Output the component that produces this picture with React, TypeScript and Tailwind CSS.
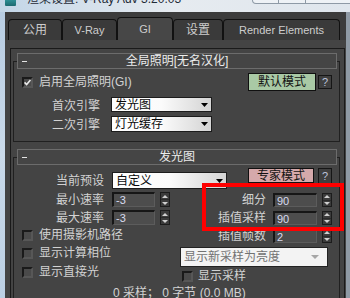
import React from "react";

const FONT = "font-['Liberation_Sans','Noto_Sans_CJK_SC',sans-serif]";

function Check({ checked = false }: { checked?: boolean }) {
  return (
    <div className="w-[11px] h-[11px] shrink-0 border-2 border-t-[#1a1a1a] border-l-[#1a1a1a] border-r-[#575757] border-b-[#575757] bg-[#4a4a4a] flex items-center justify-center">
      {checked && (
        <svg width="8" height="7" viewBox="0 0 8 7">
          <path d="M0.6 3.4 L3 5.9 L7.4 0.6" stroke="#ececec" strokeWidth="1.8" fill="none" />
        </svg>
      )}
    </div>
  );
}

function Label({ children, className = "" }: { children: React.ReactNode; className?: string }) {
  return <span className={`text-[12px] leading-[14px] text-[#d2d2d2] whitespace-nowrap ${className}`}>{children}</span>;
}

function Spin() {
  return (
    <div className="w-[10px] h-full shrink-0 border border-[#1c1c1c] bg-[#3b3b3b] flex flex-col">
      <div className="flex-1 flex items-center justify-center border-b border-[#2a2a2a]">
        <svg width="6" height="3" viewBox="0 0 6 3">
          <polygon points="0,3 3,0 6,3" fill="#cfcfcf" />
        </svg>
      </div>
      <div className="flex-1 flex items-center justify-center">
        <svg width="6" height="3" viewBox="0 0 6 3">
          <polygon points="0,0 6,0 3,3" fill="#cfcfcf" />
        </svg>
      </div>
    </div>
  );
}

function Num({ v, className = "" }: { v: string; className?: string }) {
  return (
    <div
      className={`h-full shrink-0 border-t-2 border-l-2 border-r border-b border-t-[#161616] border-l-[#161616] border-r-[#5c5c5c] border-b-[#5c5c5c] bg-[#4d4d4d] flex items-center pl-[2px] text-[11px] leading-[12px] text-[#d8dbf0] ${className}`}
    >
      {v}
    </div>
  );
}

function Drop({ text, className = "" }: { text: string; className?: string }) {
  return (
    <div
      className={`shrink-0 border border-[#1c1c1c] bg-linear-to-r from-white via-[#fbfbfb] to-[#d4d4d4] flex items-center justify-between pl-[3px] pr-[3px] ${className}`}
    >
      <span className="text-[12px] leading-[14px] text-[#0a0a0a] whitespace-nowrap">{text}</span>
      <svg width="7" height="4" viewBox="0 0 7 4">
        <polygon points="0,0 7,0 3.5,4" fill="#000" />
      </svg>
    </div>
  );
}

function Tab({ label, w, active = false, latin = false }: { label: string; w: string; active?: boolean; latin?: boolean }) {
  return (
    <div
      className={`${w} ${active ? "h-[23px] bg-[#474747]" : "h-[21px] bg-[#3a3a3a]"} shrink-0 border border-b-0 border-[#111111] rounded-t-[4px] flex items-center justify-center ${latin ? "text-[11px]" : "text-[12px]"} leading-[14px] text-[#cdcdcd]`}
    >
      {label}
    </div>
  );
}

function RHead({ title }: { title: string }) {
  return (
    <div className="relative z-10 ml-[4px] mr-[3px] h-[16px] border border-[#6c6c6c] bg-[#454545] flex items-center">
      <div className="ml-[4px] w-[5px] h-[1px] bg-[#e4e4e4] shrink-0" />
      <div className="flex-1 -ml-[9px] text-center text-[12px] leading-[14px] text-[#ececec] whitespace-nowrap">{title}</div>
    </div>
  );
}

function QBtn({ className = "" }: { className?: string }) {
  return (
    <div className={`w-[14px] shrink-0 border border-[#161616] bg-[#3f3f3f] flex items-center justify-center text-[11px] leading-[12px] text-[#bcc3dc] ${className}`}>
      ?
    </div>
  );
}

export default function App() {
  return (
    <div className={`relative w-[350px] h-[298px] overflow-hidden bg-[#c7d6e4] ${FONT}`}>
      {/* title bar */}
      <div className="h-[12px] flex items-start overflow-hidden bg-linear-to-r from-[#c3d6e7] via-[#e6ebf0] to-[#dfe6ed]">
        <div className="ml-[5px] w-[11px] h-[6px] shrink-0 bg-linear-to-b from-[#2f8f94] to-[#1d6a70] rounded-b-[1px]" />
        <div className="ml-[11px] -mt-[8px] text-[12px] leading-[14px] text-[#1f2b38] whitespace-nowrap">渲染设置: V-Ray Adv 3.20.03</div>
        <div className="ml-auto -mr-[6px] w-[104px] h-[4px] shrink-0 border border-t-0 border-[#8e9aa6] rounded-b-[4px] bg-[#eef2f6] flex">
          <div className="w-[26px] border-r border-[#8e9aa6]" />
          <div className="w-[27px] border-r border-[#8e9aa6]" />
        </div>
      </div>

      {/* body */}
      <div className="h-[286px] flex">
        <div className="w-[5px] shrink-0 bg-linear-to-b from-[#b8cde2] via-[#cadaea] to-[#bcd0e4]" />
        <div className="w-[341px] shrink-0 bg-[#3c3c3c] flex flex-col">
          <div className="h-[5px] shrink-0" />
          {/* tabs */}
          <div className="h-[23px] shrink-0 flex items-end pl-[3px]">
            <Tab label="公用" w="w-[54px]" />
            <Tab label="V-Ray" w="w-[55px]" latin />
            <Tab label="GI" w="w-[56px]" active latin />
            <Tab label="设置" w="w-[50px]" />
            <Tab label="Render Elements" w="w-[117px]" latin />
          </div>
          {/* panel */}
          <div className="flex-1 bg-[#444444] pt-[8px] pl-[5px] pr-[1px] overflow-hidden">
            <div className="h-full border-t border-l border-r border-[#1a1a1a] pt-[4px] pl-[2px]">
              <div className="w-[327px]">
                {/* rollout 1 */}
                <RHead title="全局照明[无名汉化]" />
                <div className="-mt-[8px] border border-[#202020] pt-[11px] pb-[9px]">
                  <div className="h-[18px] flex items-center pl-[8px] pr-[7px]">
                    <Check checked />
                    <Label className="ml-[6px]">启用全局照明(GI)</Label>
                    <div className="ml-auto w-[68px] h-[18px] shrink-0 border border-[#101010] bg-[#a9c9a5] flex items-center justify-center text-[12px] leading-[14px] text-[#121212]">
                      默认模式
                    </div>
                    <QBtn className="ml-[2px] h-[14px]" />
                  </div>
                  <div className="mt-[6px] h-[15px] flex items-center">
                    <div className="w-[86px] shrink-0 text-right">
                      <Label>首次引擎</Label>
                    </div>
                    <Drop text="发光图" className="ml-[11px] w-[101px] h-[15px]" />
                  </div>
                  <div className="mt-[4px] h-[16px] flex items-center">
                    <div className="w-[86px] shrink-0 text-right">
                      <Label>二次引擎</Label>
                    </div>
                    <Drop text="灯光缓存" className="ml-[11px] w-[101px] h-[16px]" />
                  </div>
                </div>

                {/* rollout 2 */}
                <div className="mt-[7px]">
                  <RHead title="发光图" />
                </div>
                <div className="-mt-[8px] border border-b-0 border-[#202020] pt-[10px] h-[200px]">
                  <div className="h-[22px] flex items-start">
                    <div className="mt-[4px] w-[90px] h-[17px] shrink-0 flex items-center justify-end">
                      <Label>当前预设</Label>
                    </div>
                    <Drop text="自定义" className="mt-[4px] ml-[8px] w-[115px] h-[17px]" />
                    <div className="ml-[21px] w-[66px] h-[15px] shrink-0 border border-[#101010] bg-[#d5a9ab] flex items-center justify-center text-[12px] leading-[14px] text-[#121212]">
                      专家模式
                    </div>
                    <QBtn className="ml-[4px] h-[16px]" />
                  </div>
                  <div className="mt-[2px] flex">
                    {/* left column */}
                    <div className="w-[164px] shrink-0 flex flex-col">
                      <div className="h-[15px] flex">
                        <div className="w-[90px] shrink-0 flex items-center justify-end">
                          <Label>最小速率</Label>
                        </div>
                        <Num v="-3" className="ml-[8px] w-[43px]" />
                        <div className="ml-[5px] h-full">
                          <Spin />
                        </div>
                      </div>
                      <div className="mt-[3px] h-[15px] flex">
                        <div className="w-[90px] shrink-0 flex items-center justify-end">
                          <Label>最大速率</Label>
                        </div>
                        <Num v="-3" className="ml-[8px] w-[43px]" />
                        <div className="ml-[5px] h-full">
                          <Spin />
                        </div>
                      </div>
                      <div className="mt-[4px] h-[12px] flex items-center pl-[8px]">
                        <Check />
                        <Label className="ml-[6px]">使用摄影机路径</Label>
                      </div>
                      <div className="mt-[6px] h-[12px] flex items-center pl-[8px]">
                        <Check />
                        <Label className="ml-[6px]">显示计算相位</Label>
                      </div>
                      <div className="mt-[7px] h-[12px] flex items-center pl-[8px]">
                        <Check />
                        <Label className="ml-[6px]">显示直接光</Label>
                      </div>
                    </div>
                    {/* right column */}
                    <div className="flex-1 flex flex-col">
                      <div className="mt-[1px] h-[14px] flex">
                        <div className="w-[88px] shrink-0 flex items-center justify-end">
                          <Label>细分</Label>
                        </div>
                        <Num v="90" className="ml-[7px] w-[44px]" />
                        <div className="ml-[5px] h-full">
                          <Spin />
                        </div>
                      </div>
                      <div className="mt-[4px] h-[14px] flex">
                        <div className="w-[88px] shrink-0 flex items-center justify-end">
                          <Label>插值采样</Label>
                        </div>
                        <Num v="90" className="ml-[7px] w-[44px]" />
                        <div className="ml-[5px] h-full">
                          <Spin />
                        </div>
                      </div>
                      <div className="mt-[4px] h-[14px] flex">
                        <div className="w-[88px] shrink-0 flex items-center justify-end">
                          <Label>插值帧数</Label>
                        </div>
                        <Num v="2" className="ml-[7px] w-[44px]" />
                        <div className="ml-[5px] h-full">
                          <Spin />
                        </div>
                      </div>
                      <div className="mt-[4px] ml-[2px] w-[148px] h-[20px] border border-[#222222] bg-[#f3f3f3] flex items-center justify-between pl-[3px] pr-[8px]">
                        <span className="text-[12px] leading-[14px] text-[#727272] whitespace-nowrap">显示新采样为亮度</span>
                        <svg width="8" height="4" viewBox="0 0 8 4">
                          <polygon points="0,0 8,0 4,4" fill="#a6a6a6" />
                        </svg>
                      </div>
                      <div className="mt-[3px] h-[12px] flex items-center pl-[4px]">
                        <Check />
                        <Label className="ml-[5px]">显示采样</Label>
                      </div>
                    </div>
                  </div>
                  <div className="mt-[5px] pl-[99px] h-[12px] flex items-center">
                    <Label>0 采样； 0 字节 (0.0 MB)</Label>
                  </div>
                </div>
              </div>
            </div>
          </div>
        </div>
        <div className="w-[4px] shrink-0 bg-[#8f9aa5]" />
      </div>

      {/* red annotation box */}
      <div className="absolute left-[202px] top-[183px] w-[142px] h-[48px] border-4 border-[#ff0000]" />
    </div>
  );
}
